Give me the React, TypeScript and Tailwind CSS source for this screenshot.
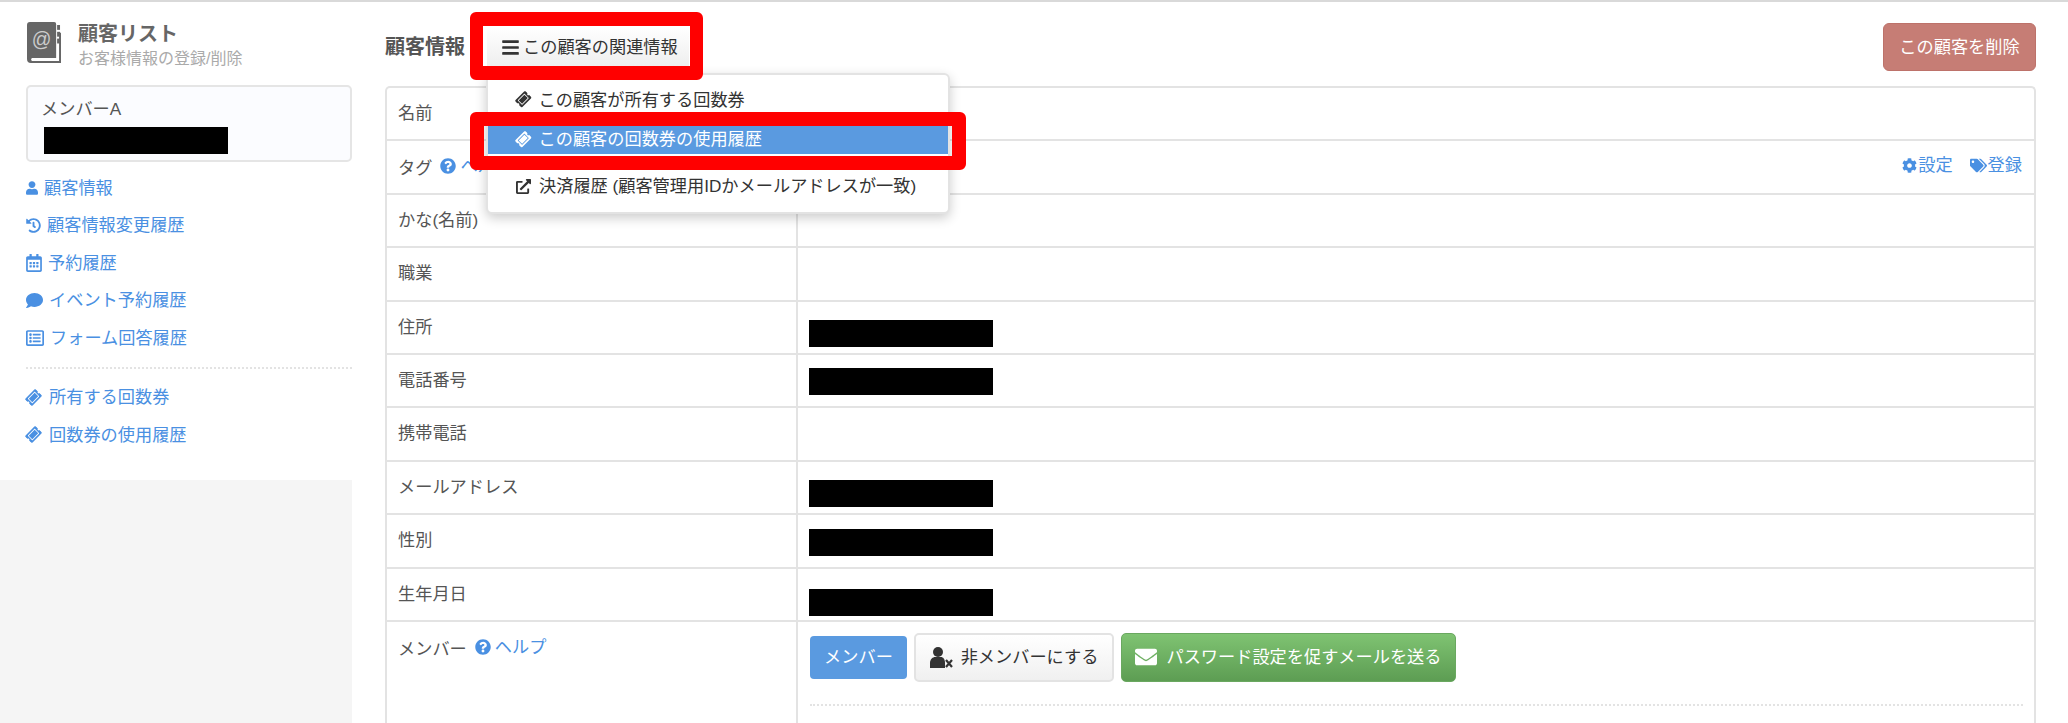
import { FaUser, FaHistory, FaRegCalendarAlt, FaComment, FaRegListAlt, FaTicketAlt, FaBars, FaExternalLinkAlt, FaQuestionCircle, FaCog, FaTags, FaEnvelope } from "react-icons/fa";
import type { ReactNode } from "react";

const Ticket = ({ className }: { className?: string }) => (
  <FaTicketAlt className={`-rotate-45 ${className ?? ""}`} />
);

const BookIcon = () => (
  <svg width="34" height="41" viewBox="0 0 35 42" className="ml-[1px] shrink-0">
    <path d="M3 0h25a2 2 0 0 1 2 2v35H5a2 2 0 0 0 0 3h28v-29h2v31H4a4 4 0 0 1-4-4V3a3 3 0 0 1 3-3z" fill="#666" />
    <rect x="31" y="3" width="3" height="5" fill="#666" />
    <rect x="31" y="10" width="3" height="5" fill="#666" />
    <rect x="31" y="17" width="3" height="5" fill="#666" />
    <text x="15" y="25" textAnchor="middle" fontSize="20" fill="#ccc" fontFamily="Liberation Sans, sans-serif">@</text>
  </svg>
);

const UserX = () => (
  <svg width="23" height="21" viewBox="0 0 23 21" className="shrink-0">
    <circle cx="8" cy="5" r="5" fill="#333" />
    <path d="M0 21v-5c0-4 3-6 5-6h6c2 0 4 2 4 6v5z" fill="#333" />
    <path d="M16 13l6 7M22 13l-6 7" stroke="#333" strokeWidth="2.2" />
  </svg>
);

const NavLink = ({ icon, label, box }: { icon: ReactNode; label: string; box: string }) => (
  <a className="flex h-[37.5px] items-center gap-[6px] text-[#4a90e2]">
    <span className={`flex justify-start ${box}`}>{icon}</span>
    {label}
  </a>
);

const Redacted = ({ className }: { className?: string }) => (
  <div className={`h-[27px] w-[184px] bg-black ${className ?? ""}`} />
);

const Help = ({ gap }: { gap: string }) => (
  <span className={`inline-flex items-center gap-[4px] text-[#4a90e2] ${gap}`}>
    <FaQuestionCircle className="text-[16px]" />
    ヘルプ
  </span>
);

const Row = ({ label, children }: { label: ReactNode; children?: ReactNode }) => (
  <div className="flex h-[53.4px] border-b-2 border-[#e3e3e3]">
    <div className="w-[411px] shrink-0 border-r-2 border-[#e3e3e3] px-[11px] pt-[13px]">{label}</div>
    <div className="relative flex-1 px-[11px]">{children}</div>
  </div>
);

export default function App() {
  return (
    <div
      className="relative flex h-[723px] w-[2068px] overflow-hidden border-t-2 border-[#d9d9d9] bg-white text-[17.2px] leading-[24px] text-[#555]"
      style={{ fontFamily: '"Liberation Sans", "Noto Sans CJK JP", sans-serif' }}
    >
      {/* sidebar */}
      <aside className="flex w-[352px] shrink-0 flex-col">
        <div className="pl-[26px]">
          <div className="flex h-[83px] items-start gap-[17px] pt-[20px]">
            <BookIcon />
            <div>
              <div className="text-[20px] font-bold leading-[24px] text-[#666]">顧客リスト</div>
              <div className="mt-[3px] text-[16px] leading-[20px] text-[#aaa]">お客様情報の登録/削除</div>
            </div>
          </div>
          <div className="h-[77px] rounded-[5px] border-2 border-[#e5e5e5] bg-[#fbfcff] pl-[13px] pt-[10px]">
            <div>メンバーA</div>
            <Redacted className="ml-[3px] mt-[6px]" />
          </div>
          <div className="mt-[7px]">
            <NavLink box="w-[12px]" icon={<FaUser className="text-[14px]" />} label="顧客情報" />
            <NavLink box="w-[15px]" icon={<FaHistory className="text-[15px]" />} label="顧客情報変更履歴" />
            <NavLink box="w-[16px]" icon={<FaRegCalendarAlt className="text-[18px]" />} label="予約履歴" />
            <NavLink box="w-[17px]" icon={<FaComment className="text-[17px]" />} label="イベント予約履歴" />
            <NavLink box="w-[18px]" icon={<FaRegListAlt className="text-[18px]" />} label="フォーム回答履歴" />
          </div>
          <div className="mb-[10px] mt-[10px] border-t-2 border-dotted border-[#e3e3e3]" />
          <NavLink box="w-[17px]" icon={<Ticket className="text-[15px]" />} label="所有する回数券" />
          <NavLink box="w-[17px]" icon={<Ticket className="text-[15px]" />} label="回数券の使用履歴" />
        </div>
        <div className="mt-auto h-[243px] bg-[#f5f5f5]" />
      </aside>

      {/* main */}
      <main className="ml-[33px] w-[1651px] shrink-0">
        <div className="flex h-[84px] items-start justify-between">
          <div className="flex items-center pt-[25px]">
            <h2 className="w-[102px] text-[20px] font-bold text-[#555]">顧客情報</h2>
            <div className="relative">
              <button className="flex h-[40px] w-[202px] items-center gap-[3px] bg-gradient-to-b from-white to-[#eee] pl-[14px] text-[#333]">
                <FaBars className="text-[19px]" />
                この顧客の関連情報
              </button>
              {/* dropdown */}
              <div className="absolute -left-[1px] top-[46px] z-10 h-[141px] w-[464px] rounded-[6px] border-2 border-[#e3e3e3] bg-white text-[#333] shadow-[0_4px_12px_rgba(0,0,0,0.2)]">
                <div className="flex h-[37px] items-center gap-[8px] pl-[28px] pt-[12px]">
                  <Ticket className="text-[14.5px]" />
                  この顧客が所有する回数券
                </div>
                <div className="mt-[12px] flex h-[30px] items-center gap-[8px] bg-[#5a9ae0] pl-[28px] text-white">
                  <Ticket className="text-[14.5px]" />
                  この顧客の回数券の使用履歴
                </div>
                <div className="mt-[20px] flex h-[24px] items-center gap-[8px] pl-[28px]">
                  <FaExternalLinkAlt className="text-[15px]" />
                  決済履歴 (顧客管理用IDかメールアドレスが一致)
                </div>
              </div>
            </div>
          </div>
          <button className="mt-[21px] h-[48px] w-[153px] rounded-[6px] border border-[#bd726a] bg-[#c67d75] text-white">
            この顧客を削除
          </button>
        </div>

        <div className="rounded-t-[5px] border-x-2 border-t-2 border-[#e3e3e3]">
          <Row label="名前" />
          <Row label={<>タグ<Help gap="ml-[8px]" /></>}>
            <div className="absolute right-[12px] top-[12px] flex gap-[17px] text-[#4a90e2]">
              <span className="flex items-center gap-[1px]"><FaCog className="text-[15px]" />設定</span>
              <span className="flex items-center gap-[1px]"><FaTags className="text-[17px]" />登録</span>
            </div>
          </Row>
          <Row label="かな(名前)" />
          <Row label="職業" />
          <Row label="住所"><Redacted className="mt-[18px]" /></Row>
          <Row label="電話番号"><Redacted className="mt-[13px]" /></Row>
          <Row label="携帯電話" />
          <Row label="メールアドレス"><Redacted className="mt-[18px]" /></Row>
          <Row label="性別"><Redacted className="mt-[14px]" /></Row>
          <Row label="生年月日"><Redacted className="mt-[20px]" /></Row>
          <div className="flex h-[140px]">
            <div className="w-[411px] shrink-0 border-r-2 border-[#e3e3e3] px-[11px] pt-[13px]">
              メンバー
              <Help gap="ml-[8px]" />
            </div>
            <div className="flex-1 px-[11px]">
              <div className="flex items-center gap-[7px] pt-[11px]">
                <button className="ml-[1px] h-[43px] w-[97px] rounded-[4px] bg-[#5a9ae0] text-white">メンバー</button>
                <button className="flex h-[49px] w-[200px] items-center justify-center gap-[8px] rounded-[5px] border-2 border-[#e3e3e3] bg-gradient-to-b from-white to-[#f0f0f0] text-[#333]">
                  <UserX />
                  非メンバーにする
                </button>
                <button className="flex h-[49px] w-[335px] items-center justify-center gap-[9px] rounded-[5px] border border-[#6aa860] bg-gradient-to-b from-[#7fc372] to-[#5d9d53] text-white">
                  <FaEnvelope className="text-[22px]" />
                  パスワード設定を促すメールを送る
                </button>
              </div>
              <div className="ml-[1px] mt-[22px] border-t-2 border-dotted border-[#e3e3e3]" />
            </div>
          </div>
        </div>
      </main>

      {/* red highlight frames */}
      <div className="absolute left-[470px] top-[10px] z-20 h-[68px] w-[233px] rounded-[6px] border-x-[13px] border-y-[14px] border-[#ff0000]" />
      <div className="absolute left-[470px] top-[110px] z-20 h-[58px] w-[496px] rounded-[6px] border-x-[14px] border-y-[14px] border-[#ff0000]" />
    </div>
  );
}
